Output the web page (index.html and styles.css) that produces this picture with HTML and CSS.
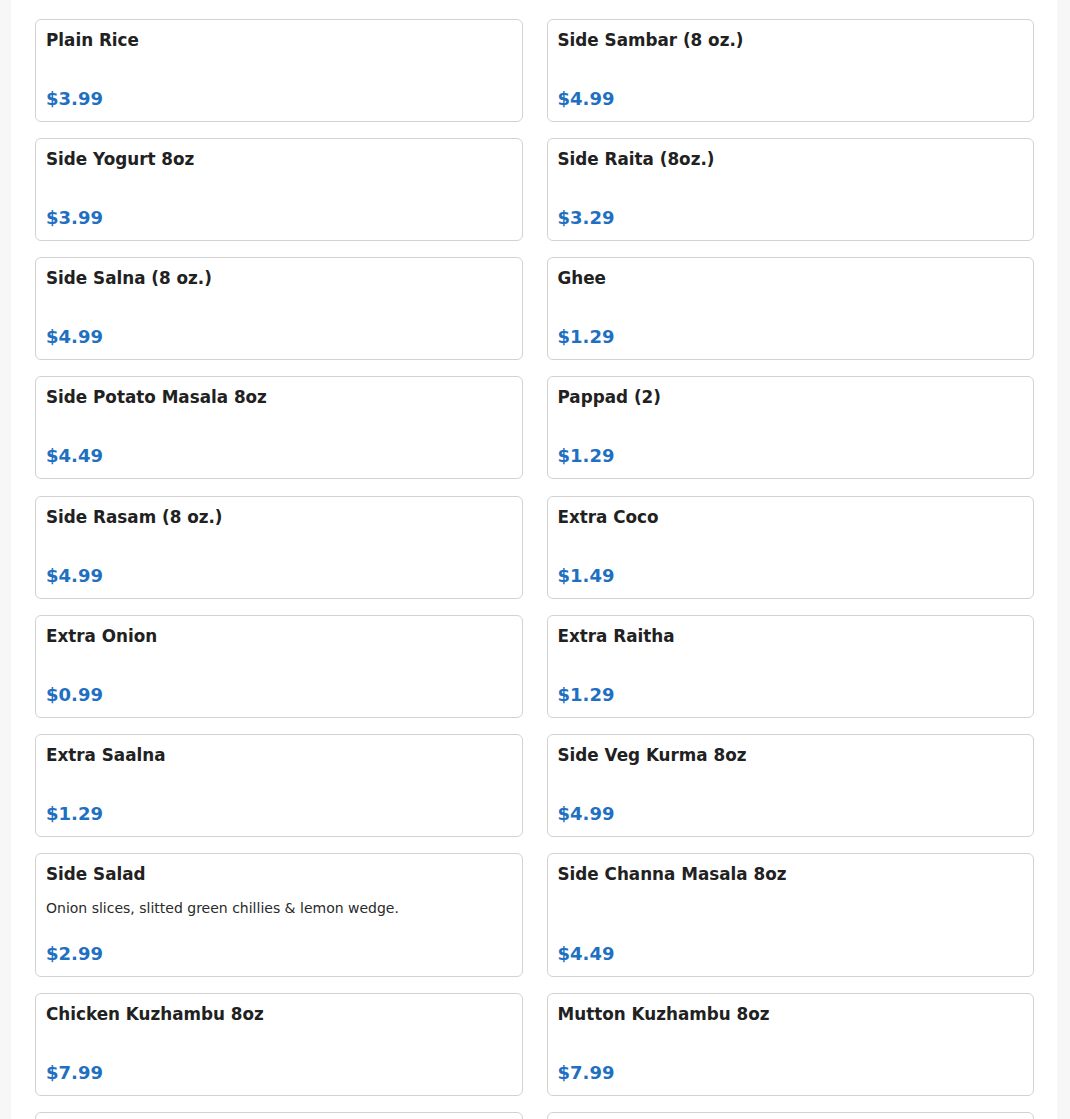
FILE: index.html
```html
<!DOCTYPE html>
<html lang="en">
<head>
<meta charset="utf-8">
<title>Sides</title>
<link rel="stylesheet" href="styles.css">
</head>
<body>
<main class="page">
  <div class="grid">
    <div class="card"><div class="name">Plain Rice</div><div class="price">$3.99</div></div>
    <div class="card"><div class="name">Side Sambar (8 oz.)</div><div class="price">$4.99</div></div>
    <div class="card"><div class="name">Side Yogurt 8oz</div><div class="price">$3.99</div></div>
    <div class="card"><div class="name">Side Raita (8oz.)</div><div class="price">$3.29</div></div>
    <div class="card"><div class="name">Side Salna (8 oz.)</div><div class="price">$4.99</div></div>
    <div class="card"><div class="name">Ghee</div><div class="price">$1.29</div></div>
    <div class="card"><div class="name">Side Potato Masala 8oz</div><div class="price">$4.49</div></div>
    <div class="card"><div class="name">Pappad (2)</div><div class="price">$1.29</div></div>
    <div class="card"><div class="name">Side Rasam (8 oz.)</div><div class="price">$4.99</div></div>
    <div class="card"><div class="name">Extra Coco</div><div class="price">$1.49</div></div>
    <div class="card"><div class="name">Extra Onion</div><div class="price">$0.99</div></div>
    <div class="card"><div class="name">Extra Raitha</div><div class="price">$1.29</div></div>
    <div class="card"><div class="name">Extra Saalna</div><div class="price">$1.29</div></div>
    <div class="card"><div class="name">Side Veg Kurma 8oz</div><div class="price">$4.99</div></div>
    <div class="card"><div class="name">Side Salad</div><div class="desc">Onion slices, slitted green chillies &amp; lemon wedge.</div><div class="price">$2.99</div></div>
    <div class="card"><div class="name">Side Channa Masala 8oz</div><div class="price">$4.49</div></div>
    <div class="card"><div class="name">Chicken Kuzhambu 8oz</div><div class="price">$7.99</div></div>
    <div class="card"><div class="name">Mutton Kuzhambu 8oz</div><div class="price">$7.99</div></div>
    <div class="card"><div class="name">Side Dal 8oz</div><div class="price">$4.99</div></div>
    <div class="card"><div class="name">Side Chutney 8oz</div><div class="price">$2.99</div></div>
  </div>
</main>
</body>
</html>
```

FILE: styles.css
```css
html, body {
  margin: 0;
  padding: 0;
}

body {
  background: #f7f7f7;
  font-family: "DejaVu Sans", "Liberation Sans", sans-serif;
  color: #212121;
}

.page {
  background: #ffffff;
  margin: 0 13px 0 11px;
  padding: 19px 23px 40px 24px;
  min-height: 1200px;
}

.grid {
  display: grid;
  grid-template-columns: 1fr 1fr;
  column-gap: 24px;
  row-gap: 16.15px;
}

.card {
  display: flex;
  flex-direction: column;
  border: 1px solid #d2d2d2;
  border-radius: 6px;
  padding: 10px 10px 12px 10px;
  background: #fff;
}

.name {
  font-size: 16.8px;
  font-weight: bold;
  line-height: 20px;
  margin-bottom: 12px;
  color: #212121;
}

.desc {
  font-size: 14px;
  line-height: 16.85px;
  margin-top: 4px;
  color: #2a2a2a;
}

.price {
  margin-top: auto;
  padding-top: 26px;
  font-size: 18px;
  font-weight: bold;
  line-height: 21px;
  color: #1f70c1;
}
```
